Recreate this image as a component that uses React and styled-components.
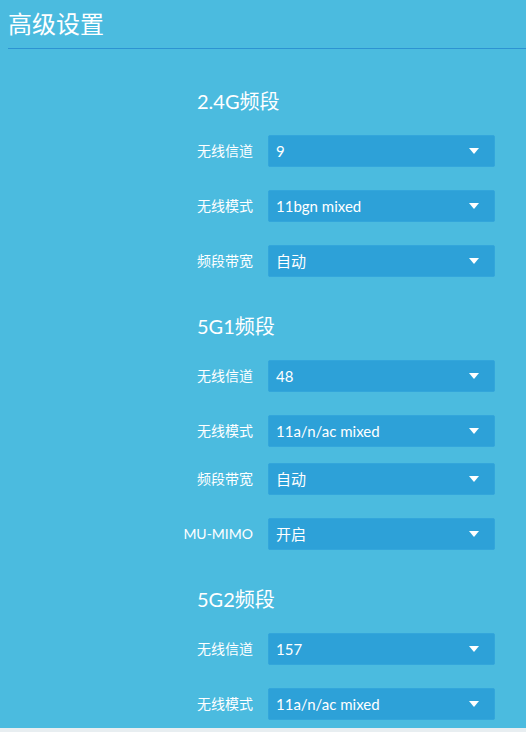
import React from 'react';
import styled, { createGlobalStyle } from 'styled-components';

const GlobalStyle = createGlobalStyle`
	html, body {
		margin: 0;
		padding: 0;
		background: #e8eef1;
	}
	body {
		font-family: Lato, "Noto Sans CJK SC", sans-serif;
	}
`;

const Page = styled.div`
	height: 728px;
	background: #4bbbdf;
	overflow: hidden;
	color: #fff;
`;

const Header = styled.div`
	margin-left: 8px;
	height: 48px;
	border-bottom: 1px solid #2d93d2;
`;

const Title = styled.h1`
	margin: 0;
	font-size: 24px;
	font-weight: normal;
	line-height: 48px;
`;

const Content = styled.div`
	margin-left: 153px;
	width: 342px;
`;

const Section = styled.div`
	margin-top: ${(p) => p.$top}px;
	display: flex;
	flex-direction: column;
`;

const SectionTitle = styled.h2`
	margin: 0 0 19px 44px;
	font-size: 20px;
	font-weight: normal;
	line-height: 30px;
`;

const Row = styled.div`
	display: grid;
	grid-template-columns: 100px 227px;
	column-gap: 15px;
	align-items: center;
	margin-bottom: ${(p) => (p.$tight ? 16 : 23)}px;
`;

const Label = styled.label`
	text-align: right;
	font-size: 14px;
	line-height: 32px;
	white-space: nowrap;
`;

const Select = styled.div`
	box-sizing: border-box;
	height: 32px;
	padding: 0 15px 0 7px;
	display: flex;
	align-items: center;
	justify-content: space-between;
	background: #2da1d8;
	border: 1px solid #33a6db;
	border-radius: 2px;
	font-size: 15px;
	line-height: 30px;
`;

const Arrow = () => (
	<svg width="10" height="6" viewBox="0 0 10 6">
		<path d="M0 0 L10 0 L5 6 Z" fill="#fff" />
	</svg>
);

const bands = [
	{
		name: '2.4G频段',
		top: 37,
		rows: [
			{ label: '无线信道', value: '9' },
			{ label: '无线模式', value: '11bgn mixed' },
			{ label: '频段带宽', value: '自动' },
		],
	},
	{
		name: '5G1频段',
		top: 11,
		rows: [
			{ label: '无线信道', value: '48' },
			{ label: '无线模式', value: '11a/n/ac mixed', tight: true },
			{ label: '频段带宽', value: '自动' },
			{ label: 'MU-MIMO', value: '开启' },
		],
	},
	{
		name: '5G2频段',
		top: 11,
		rows: [
			{ label: '无线信道', value: '157' },
			{ label: '无线模式', value: '11a/n/ac mixed' },
		],
	},
];

const App = () => {
	return (
		<>
			<GlobalStyle />
			<Page>
				<Header>
					<Title>高级设置</Title>
				</Header>
				<Content>
					{bands.map((band) => (
						<Section key={band.name} $top={band.top}>
							<SectionTitle>{band.name}</SectionTitle>
							{band.rows.map((row) => (
								<Row key={row.label} $tight={row.tight}>
									<Label>{row.label}</Label>
									<Select>
										<span>{row.value}</span>
										<Arrow />
									</Select>
								</Row>
							))}
						</Section>
					))}
				</Content>
			</Page>
		</>
	);
};

export default App;
